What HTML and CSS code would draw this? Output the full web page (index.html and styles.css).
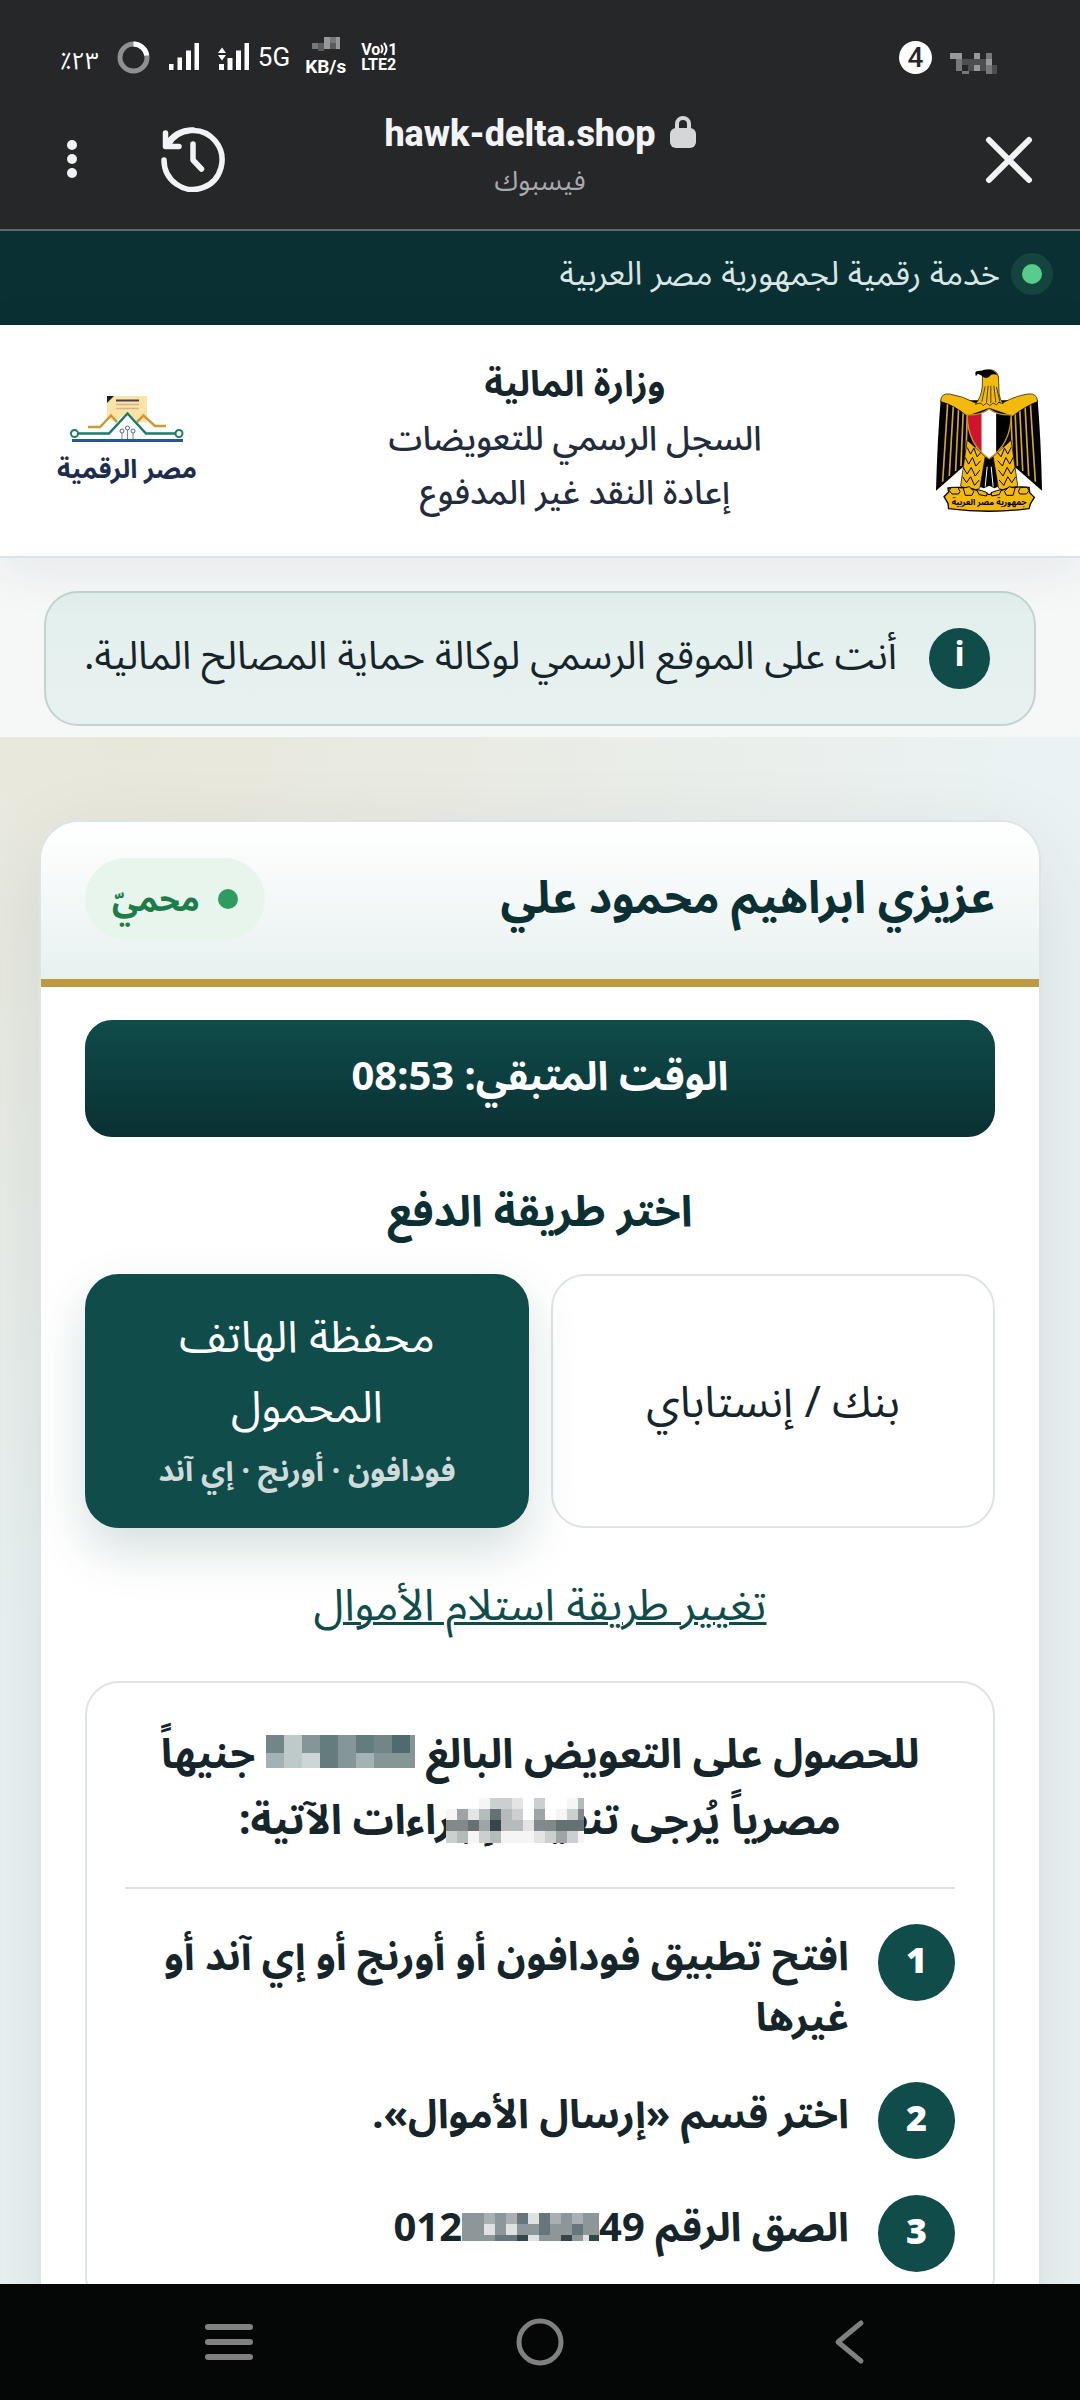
FILE: index.html
```html
<!DOCTYPE html>
<html lang="ar" dir="rtl">
<head>
    <meta charset="UTF-8">
    <meta name="viewport" content="width=device-width, initial-scale=1.0">
    <title>hawk-delta.shop</title>
    <link rel="stylesheet" href="styles.css">
</head>
<body>
    <header class="browser">
        <div class="status">
            <div class="status-side">
                <svg class="clock-mosaic" width="48" height="21" viewBox="0 0 48 21" shape-rendering="crispEdges">
                    <path fill="#98999b" d="M0 0h12v6H0zM24 0h6v6h-6zM36 6h6v6h-6zM24 12h6v6h-6z"/>
                    <path fill="#77787a" d="M6 6h6v12H6zM36 0h6v6h-6zM36 12h6v9h-6zM12 18h7v3h-7z"/>
                    <path fill="#4d4e50" d="M12 6h12v6H12zM18 12h6v6h-6zM24 6h12v6H24zM42 12h5v9h-5zM30 12h6v6h-6z"/>
                </svg>
                <span class="count">4</span>
            </div>
            <div class="status-side">
                <span class="volte"><span>Vo<svg width="8" height="14" viewBox="0 0 8 14" fill="none" stroke="#fff" stroke-width="2"><path d="M1 3q3 4 0 8M4 1q5 6 0 12"/></svg>1</span><span>LTE2</span></span>
                <span class="speed">
                    <svg width="28" height="14" viewBox="0 0 28 14" shape-rendering="crispEdges">
                        <path fill="#5a5b5d" d="M0 6h12v6H0zM6 12h6v2H6zM18 6h6v6h-6z"/>
                        <path fill="#97989a" d="M12 0h6v12h-6zM24 0h4v12h-4z"/>
                        <path fill="#77787a" d="M18 0h6v6h-6zM0 6h6v6H0z"/>
                    </svg>
                    <span>KB/s</span>
                </span>
                <span class="net">5G</span>
                <svg width="32" height="30" viewBox="0 0 32 30" fill="#fff"><path d="M1 22h5v6H1zM9.500 16h5v12h-5zM18 8.500h5V28h-5zM26.500 1h4.500v27h-4.500zM0 11l4-5.500L8 11zM0 13h8l-4 5.500z"/></svg>
                <svg width="32" height="30" viewBox="0 0 32 30" fill="#fff"><path d="M1 22h4.500v6H1zM9.500 15.500h4.500V28H9.500zM18 8.500h5V28h-5zM26.500 1h4.500v27h-4.500z"/></svg>
                <svg width="33" height="33" viewBox="0 0 33 33" fill="none" stroke-width="5"><circle cx="16.500" cy="16.500" r="13.500" stroke="#8f9092"/><path d="M16.500 3A13.500 13.500 0 0 1 29.800 14.500" stroke="#fff"/></svg>
                <span class="battery">٪٢٣</span>
            </div>
        </div>
        <div class="urlbar">
            <button class="icon-btn" aria-label="إغلاق">
                <svg width="48" height="48" viewBox="0 0 48 48" stroke="#f2f3f7" stroke-width="6" stroke-linecap="round"><path d="M4 4l40 40M44 4L4 44"/></svg>
            </button>
            <div class="address">
                <span class="host">
                    <svg width="26" height="32" viewBox="0 0 26 32"><path d="M7 15V8a6 6 0 0 1 12 0v7" fill="none" stroke="#d4d6d7" stroke-width="4"/><rect y="12" width="26" height="20" rx="6" fill="#d4d6d7"/></svg>
                    <bdi>hawk-delta.shop</bdi>
                </span>
                <span class="via">فيسبوك</span>
            </div>
            <div class="tools">
                <button class="icon-btn" aria-label="السجل">
                    <svg width="66" height="66" viewBox="0 0 66 66" fill="none" stroke="#f2f3f7" stroke-width="5.500" stroke-linecap="round" stroke-linejoin="round"><path d="M4 34A29 29.500 0 1 0 8 19"/><path d="M5.500 7v13.500H19M6 20C12 9 22 4 33 4M33 18v16l8.500 9"/></svg>
                </button>
                <button class="icon-btn" aria-label="القائمة">
                    <svg width="12" height="40" viewBox="0 0 12 40" fill="#f2f3f7"><circle cx="6" cy="6" r="5"/><circle cx="6" cy="20" r="5"/><circle cx="6" cy="34" r="5"/></svg>
                </button>
            </div>
        </div>
    </header>

    <main class="page">
        <div class="topbar"><i class="live"></i>خدمة رقمية لجمهورية مصر العربية</div>

        <div class="masthead">
            <svg class="eagle" viewBox="168 86 319 430" role="img" aria-label="جمهورية مصر العربية">
                <!-- wings -->
                <path fill="#000" d="M182 180Q172 300 168 452L250 380 300 300 328 210 356 300 404 380 487 452Q484 300 474 180z"/>
                <path fill="none" stroke="#d6a62c" stroke-width="5" d="M203 190L188 425M220 198L208 408M236 205L227 393M250 212L243 378M262 225L258 350M452 190L467 425M436 198L447 408M420 205L429 393M406 212L413 378M394 225L398 350"/>
                <path fill="#f3b90b" stroke="#000" stroke-width="2" d="M182 184Q182 158 208 161 245 166 285 187L370 187Q412 165 446 161 472 158 474 184 440 196 398 228L328 204 262 228Q222 194 182 184z"/>
                <!-- head and neck -->
                <path fill="#f3b90b" stroke="#000" stroke-width="2" d="M308 106Q310 88 332 88 352 90 356 110L358 160Q360 178 370 190L356 186 350 194 340 188 330 196 320 188 310 196 302 188 286 192Q304 172 307 140z"/>
                <path d="M286 98Q288 90 304 91 320 84 338 90 350 96 352 104 334 98 330 108 318 118 306 106L294 100 288 108z"/>
                <path fill="none" stroke="#000" stroke-width="2" d="M316 138l-10 46M325 136l-5 50M333 136v52M342 136l6 50M350 140l10 44"/>
                <!-- legs and tail -->
                <path d="M306 350h46l2 90-10 5-16-8-16 8-12-5z"/>
                <path stroke="#fff" stroke-width="3" d="M316 440l6-60M340 440l-6-60"/>
                <path fill="#f3b90b" stroke="#000" stroke-width="2" d="M262 300L242 438Q280 460 300 444L316 350zM394 300L414 438Q376 460 356 444L340 350z"/>
                <path fill="none" stroke="#000" stroke-width="3" d="M262 322l10 20 10-18 10 26 12-14M256 352l10 20 12-20 10 26 14-16M250 382l12 20 12-20 12 26 14-18M248 410l12 18 12-18 12 26 14-16M394 322l-10 20-10-18-10 26-12-14M400 352l-10 20-12-20-10 26-14-16M406 382l-12 20-12-20-12 26-14-18M408 410l-12 18-12-18-12 26-14-16"/>
                <!-- shield -->
                <path fill="#fff" d="M328 206Q352 225 394 224 394 310 328 356 262 310 262 224 304 225 328 206z"/>
                <path fill="#cf142b" d="M305 219V338Q264 304 262 224 288 225 305 219z"/>
                <path fill="#000" d="M349 219V340Q392 306 394 224 366 225 349 219z"/>
                <path fill="none" stroke="#c09432" stroke-width="4" d="M328 206Q352 225 394 224 394 310 328 356 262 310 262 224 304 225 328 206z"/>
                <!-- scroll -->
                <path fill="#f3b90b" stroke="#000" stroke-width="4" d="M192 470L206 456 204 444Q250 440 276 446L328 464 380 446Q410 438 448 442L450 458 464 472 452 492 448 506Q328 522 206 506L204 490z"/>
                <path fill="#f3b90b" stroke="#000" stroke-width="3" d="M214 442h20l6 12-4 8h-20l-8-10zM250 444l18-4 14 14-6 12h-20zM290 448l16 4 16 6-2 10-22-4zM442 442h-20l-6 12 4 8h20l8-10zM406 444l-18-4-14 14 6 12h20zM366 448l-16 4-16 6 2 10 22-4z"/>
                <text class="scroll-text" x="328" y="494" text-anchor="middle">جمهورية مصر العربية</text>
            </svg>
            <div class="titles">
                <strong>وزارة المالية</strong>
                <span>السجل الرسمي للتعويضات</span>
                <span>إعادة النقد غير المدفوع</span>
            </div>
            <div class="digital">
                <svg width="116" height="48" viewBox="70 395 116 48" fill="none">
                    <path fill="#fbe3a8" d="M108 396h40v27l-8-1-12-9-12 9-8-4z"/>
                    <path fill="#14203f" d="M108 396h7l-7 7z"/>
                    <path stroke="#4a3f50" stroke-width="2" d="M117 400.500h23"/>
                    <path stroke="#d5b48c" stroke-width="1.500" d="M117 404.500h23M117 408.500h23"/>
                    <path stroke="#cb9a35" stroke-width="2.500" d="M89 427h12l11-11.500 6 6.500M138 422l6.500-6.500L156 426h11"/>
                    <path stroke="#1d7b67" stroke-width="2.500" d="M79 433.500h31l18.500-20 18.500 20h30"/>
                    <circle cx="75.500" cy="433.500" r="3.500" stroke="#1d7b67" stroke-width="2"/>
                    <circle cx="180" cy="433.500" r="3.500" stroke="#1d7b67" stroke-width="2"/>
                    <path stroke="#6d83b4" d="M123 439v-6M128.500 439v-9M134 439v-6"/>
                    <circle cx="123" cy="431" r="2" stroke="#4d68a4"/><circle cx="128.500" cy="428" r="2" stroke="#4d68a4"/><circle cx="134" cy="431" r="2" stroke="#4d68a4"/>
                    <path stroke="#285593" stroke-width="3" d="M73 440.500h111"/>
                </svg>
                <span>مصر الرقمية</span>
            </div>
        </div>

        <div class="notice-wrap">
            <div class="notice"><b>i</b><p>أنت على الموقع الرسمي لوكالة حماية المصالح المالية.</p></div>
        </div>

        <section class="card">
            <div class="card-head">
                <h1>عزيزي ابراهيم محمود علي</h1>
                <span class="badge"><i></i>محميّ</span>
            </div>
            <div class="card-body">
                <div class="timer">الوقت المتبقي: 08:53</div>
                <h2>اختر طريقة الدفع</h2>
                <div class="methods">
                    <button class="method">بنك / إنستاباي</button>
                    <button class="method active">محفظة الهاتف المحمول<small>فودافون · أورنج · إي آند</small></button>
                </div>
                <a class="change" href="#">تغيير طريقة استلام الأموال</a>

                <div class="steps">
                    <p class="intro">للحصول على التعويض البالغ
                        <svg width="149" height="33" viewBox="0 0 149 33" shape-rendering="crispEdges">
                            <path fill="#849697" d="M0 0h149v33H0z"/>
                            <path fill="#728687" d="M0 0h18v18H0zM108 0h18v18h-18z"/>
                            <path fill="#becaca" d="M18 0h18v33H18z"/>
                            <path fill="#647c7e" d="M54 0h18v33H54zM90 0h18v18H90z"/>
                            <path fill="#4f6b6d" d="M126 0h18v18h-18z"/>
                            <path fill="#a3b2b4" d="M0 18h18v15H0zM90 18h18v15H90z"/>
                            <path fill="#ced5d6" d="M36 18h18v15H36z"/>
                        </svg>
                        جنيهاً مصرياً يُرجى <span class="covered">تنفيذ الإجراءات<svg width="138" height="45" viewBox="0 0 138 45" shape-rendering="crispEdges">
                            <path fill="#f5f5f6" d="M0 11h33V0h105v45H0z"/>
                            <path fill="#fff" d="M77 0h11v22H77zM99 0h22v11H99zM99 11h11v11H99z"/>
                            <path fill="#e3e5e5" d="M66 0h11v11H66zM22 11h11v11H22zM77 22h11v11H77zM88 33h11v12H88z"/>
                            <path fill="#cbcfd0" d="M44 0h22v11H44zM88 0h11v11H88zM66 11h11v11H66zM121 11h11v11h-11zM0 33h11v12H0zM33 33h11v12H33zM99 33h11v12H99zM121 33h11v12h-11z"/>
                            <path fill="#b5babb" d="M132 0h6v11h-6zM33 11h11v11H33zM55 11h11v22H55zM66 22h11v11H66zM11 33h11v12H11zM44 33h11v12H44z"/>
                            <path fill="#9fa5a7" d="M11 11h11v11H11zM33 22h11v11H33zM88 11h11v11H88zM110 33h11v12h-11z"/>
                            <path fill="#83898b" d="M0 22h22v11H0zM88 22h22v11H88zM132 11h6v11h-6z"/>
                            <path fill="#667174" d="M22 22h11v11H22zM110 22h28v11h-28zM44 11h11v11H44z"/>
                            <path fill="#37464a" d="M44 22h11v11H44z"/>
                        </svg></span> الآتية:</p>
                    <ol>
                        <li><b>1</b><span>افتح تطبيق فودافون أو أورنج أو إي آند أو غيرها</span></li>
                        <li><b>2</b><span>اختر قسم «إرسال الأموال».</span></li>
                        <li><b>3</b><span>الصق الرقم <bdi class="phone">012<svg width="137" height="28" viewBox="0 0 137 28" shape-rendering="crispEdges">
                            <path fill="#8d9698" d="M0 0h137v28H0z"/>
                            <path fill="#aab0b2" d="M22 0h11v11H22zM44 0h11v11H44zM88 0h11v11H88zM110 0h11v11h-11zM99 22h11v6H99z"/>
                            <path fill="#dfe2e2" d="M22 11h11v11H22zM44 11h11v11H44zM66 0h11v11H66zM66 22h11v6H66zM121 22h11v6h-11z"/>
                            <path fill="#66767a" d="M55 0h11v11H55zM77 0h11v22H77zM33 22h22v6H33zM110 11h11v11h-11z"/>
                            <path fill="#33464a" d="M55 22h11v6H55zM99 22h11v6H99zM127 22h10v6h-10z"/>
                        </svg>49</bdi></span></li>
                    </ol>
                </div>
            </div>
        </section>
    </main>

    <nav class="sysnav">
        <button class="icon-btn" aria-label="رجوع"><svg width="50" height="50" viewBox="0 0 50 50" fill="none" stroke="#7f807f" stroke-width="5" stroke-linecap="round" stroke-linejoin="round"><path d="M35 6L12 25l23 19"/></svg></button>
        <button class="icon-btn" aria-label="الرئيسية"><svg width="50" height="50" viewBox="0 0 50 50" fill="none" stroke="#7f807f" stroke-width="5"><circle cx="25" cy="25" r="21"/></svg></button>
        <button class="icon-btn" aria-label="التطبيقات"><svg width="50" height="50" viewBox="0 0 50 50" stroke="#7f807f" stroke-width="6" stroke-linecap="round"><path d="M4 10h42M4 25h42M4 40h42"/></svg></button>
    </nav>
</body>
</html>
```
FILE: styles.css
```css
* {
    box-sizing: border-box;
}

body {
    margin: 0;
    height: 100vh;
    display: flex;
    flex-direction: column;
    font-family: "Noto Sans", "Noto Sans Arabic", "DejaVu Sans", sans-serif;
    color: #15252a;
    background: #ebf1f1;
}

p, h1, h2, ol {
    margin: 0;
    padding: 0;
}

svg {
    display: block;
    flex: none;
}

button {
    font-family: inherit;
    cursor: pointer;
}

.icon-btn {
    display: flex;
    padding: 0;
    border: 0;
    background: none;
}

/* browser chrome */
.browser {
    flex: none;
    background: #262729;
    border-bottom: 2px solid #5d696b;
    color: #fff;
    font-family: Roboto, "Noto Sans Arabic", "DejaVu Sans", sans-serif;
}

.status {
    display: flex;
    justify-content: space-between;
    height: 114px;
    padding: 0 82px 0 60px;
}

.status-side {
    display: flex;
    align-items: center;
    gap: 18px;
}

.clock-mosaic {
    margin-top: 12px;
}

.count {
    width: 33px;
    height: 33px;
    border-radius: 50%;
    background: #fff;
    color: #262729;
    font-size: 28px;
    line-height: 33px;
    text-align: center;
    font-weight: 500;
}

.volte {
    direction: ltr;
    display: flex;
    flex-direction: column;
    font-size: 16px;
    line-height: 15px;
    font-weight: 700;
}

.volte span {
    display: flex;
}

.speed {
    display: flex;
    flex-direction: column;
    align-items: center;
    gap: 6px;
    margin: 0 -3px;
    font-size: 19px;
    line-height: 20px;
    font-weight: 700;
}

.net {
    margin-left: -10px;
    font-size: 26px;
}

.battery {
    direction: ltr;
    font-size: 24px;
    line-height: 32px;
    padding-top: 8px;
}

.urlbar {
    display: grid;
    grid-template-columns: 1fr auto 1fr;
    align-items: start;
    height: 115px;
    padding: 0 47px;
}

.urlbar > .icon-btn {
    padding-top: 22px;
    width: 48px;
}

.address {
    display: flex;
    flex-direction: column;
    align-items: center;
}

.host {
    display: flex;
    align-items: center;
    gap: 14px;
    font-size: 36px;
    line-height: 40px;
    font-weight: 800;
    color: #f2f3f7;
}

.host svg {
    margin-bottom: 4px;
}

.via {
    font-size: 27px;
    line-height: 54px;
    color: #a9aaae;
}

.tools {
    display: flex;
    justify-content: flex-end;
    align-items: center;
    gap: 82px;
    padding: 12px 0 0 19px;
}

/* page */
.page {
    flex: 1;
    min-height: 0;
    overflow: hidden;
    background: radial-gradient(circle at 12% 24%, #e8e7da 0, rgba(232, 231, 218, 0) 900px), #ebf2f3;
}

.topbar {
    display: flex;
    align-items: center;
    gap: 22px;
    height: 94px;
    padding: 0 38px 8px;
    background: #0a3033;
    color: #d9e6e6;
    font-size: 33px;
}

.live {
    width: 20px;
    height: 20px;
    border-radius: 50%;
    background: #57cc8d;
    box-shadow: 0 0 0 11px #15443f;
}

.masthead {
    position: relative;
    display: flex;
    justify-content: space-between;
    align-items: center;
    height: 233px;
    padding: 0 38px 0 58px;
    background: #fff;
    border-bottom: 2px solid #dbe4e4;
    box-shadow: 0 12px 50px rgba(20, 40, 50, 0.08);
}

.eagle {
    width: 106px;
    height: 143px;
}

.scroll-text {
    font-size: 25px;
    font-weight: 700;
}

.titles {
    display: flex;
    flex-direction: column;
    align-items: center;
    padding: 0 0 8px 18px;
    font-size: 34px;
    line-height: 54px;
    font-weight: 500;
    color: #222c3c;
}

.titles strong {
    font-size: 36px;
    color: #15252a;
}

.digital {
    display: flex;
    flex-direction: column;
    align-items: center;
    width: 138px;
    padding-top: 6px;
    color: #1f2d4d;
    font-size: 26px;
    line-height: 50px;
    font-weight: 700;
    white-space: nowrap;
}

.notice-wrap {
    padding: 33px 44px 11px;
    background: #f6f8f8;
}

.notice {
    display: flex;
    align-items: center;
    gap: 32px;
    height: 135px;
    padding: 0 44px 0 30px;
    border: 2px solid #c2d3d2;
    border-radius: 34px;
    background: linear-gradient(#e2f0ed, #e5f0ef 50%, #e6f1f0);
    font-size: 39px;
}

.notice p {
    padding-bottom: 4px;
}

.notice b {
    width: 61px;
    height: 61px;
    flex: none;
    border-radius: 50%;
    background: #0f4c4a;
    color: #fff;
    font-size: 34px;
    line-height: 50px;
    text-align: center;
}

.card {
    margin: 83px 39px 0;
    border: 2px solid #dde4e4;
    border-radius: 40px 40px 0 0;
    background: #fff;
    box-shadow: 0 30px 90px rgba(20, 50, 60, 0.1);
}

.card-head {
    display: flex;
    justify-content: space-between;
    align-items: center;
    height: 165px;
    padding: 0 44px 4px;
    border-bottom: 8px solid #bd9942;
    border-radius: 38px 38px 0 0;
    background: linear-gradient(#fff, #e8f1f0);
}

.card-head h1 {
    font-size: 45px;
    color: #0a3033;
}

.badge {
    display: flex;
    align-items: center;
    gap: 18px;
    height: 82px;
    padding: 0 27px;
    border-radius: 41px;
    background: #e8f5ec;
    color: #1e7c49;
    font-size: 33px;
    line-height: 50px;
    font-weight: 700;
}

.badge i {
    width: 20px;
    height: 20px;
    border-radius: 50%;
    background: #2f9c5f;
}

.card-body {
    padding: 33px 44px;
}

.timer {
    height: 117px;
    border-radius: 27px;
    background: linear-gradient(#0f4c4a, #0a3033);
    color: #fff;
    font-size: 40px;
    line-height: 110px;
    font-weight: 700;
    text-align: center;
}

.card-body h2 {
    padding: 36px 0 28px;
    font-size: 43px;
    line-height: 73px;
    color: #0a3033;
    text-align: center;
}

.methods {
    display: grid;
    grid-template-columns: 1fr 1fr;
    gap: 22px;
}

.method {
    min-height: 254px;
    padding: 24px 60px 26px;
    border: 2px solid #dde4e4;
    border-radius: 34px;
    background: #fff;
    color: #15252a;
    font-size: 44px;
    line-height: 70px;
}

.method.active {
    border-color: #0f4c4a;
    background: #0f4c4a;
    color: #fff;
    box-shadow: 0 22px 50px rgba(15, 76, 74, 0.18);
}

.method small {
    display: block;
    margin: 0 -40px;
    font-size: 30px;
    line-height: 60px;
    font-weight: 700;
    color: #cfdbdb;
}

.change {
    display: block;
    padding: 41px 0 44px;
    color: #0f4c4a;
    font-size: 44px;
    line-height: 68px;
    text-align: center;
    text-decoration-thickness: 3px;
}

.steps {
    padding: 36px 38px;
    border: 2px solid #dde4e4;
    border-radius: 34px;
}

.intro {
    padding-bottom: 36px;
    border-bottom: 2px solid #dee1e1;
    font-size: 41px;
    line-height: 66px;
    font-weight: 700;
    text-align: center;
}

.intro > svg {
    display: inline-block;
}

.covered {
    position: relative;
    white-space: nowrap;
}

.covered svg {
    position: absolute;
    top: 8px;
    right: 36px;
}

.steps ol {
    display: flex;
    flex-direction: column;
    gap: 36px;
    padding-top: 35px;
    list-style: none;
}

.steps li {
    display: flex;
    gap: 29px;
    font-size: 40px;
    line-height: 61px;
    font-weight: 700;
}

.steps li b {
    width: 77px;
    height: 77px;
    flex: none;
    border-radius: 50%;
    background: #0f4c4a;
    color: #fff;
    font-size: 36px;
    line-height: 72px;
    text-align: center;
}

.phone svg {
    display: inline-block;
}

/* android buttons */
.sysnav {
    flex: none;
    display: flex;
    justify-content: space-between;
    align-items: center;
    height: 116px;
    padding: 0 204px;
    background: #050706;
}
```
